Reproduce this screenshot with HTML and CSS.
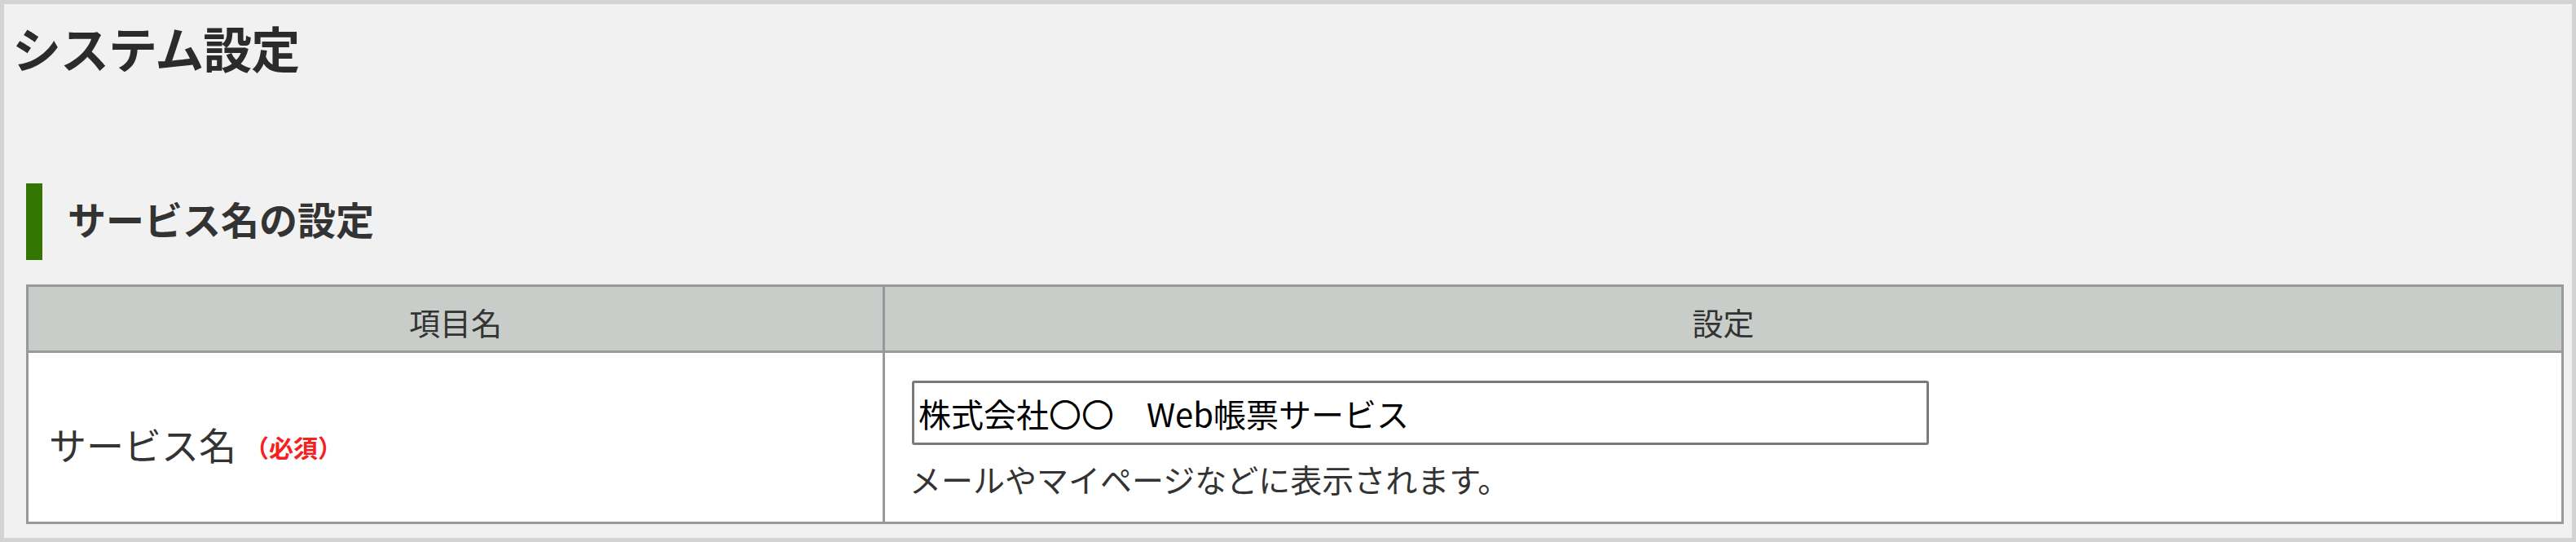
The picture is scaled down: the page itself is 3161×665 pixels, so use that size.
FILE: index.html
```html
<!DOCTYPE html>
<html lang="ja">
<head>
<meta charset="utf-8">
<title>システム設定</title>
<link rel="stylesheet" href="styles.css">
</head>
<body>
<div class="frame">
  <h1 class="page-title">システム設定</h1>
  <h2 class="section-title">サービス名の設定</h2>
  <div class="settings">
    <div class="th th-name">項目名</div>
    <div class="th th-value">設定</div>
    <div class="td td-name">サービス名<span class="required">（必須）</span></div>
    <div class="td td-value">
      <input class="text-input" type="text" value="株式会社〇〇　Web帳票サービス">
      <p class="help">メールやマイページなどに表示されます。</p>
    </div>
  </div>
</div>
</body>
</html>
```

FILE: styles.css
```css
html, body {
  margin: 0;
  padding: 0;
}
body {
  font-family: "Noto Sans CJK JP", "Noto Sans", sans-serif;
  color: #333;
}
.frame {
  box-sizing: border-box;
  width: 3161px;
  height: 665px;
  border: 5px solid #d3d3d3;
  background: #f0f1f0;
  overflow: hidden;
}
.page-title {
  margin: 23px 0 0 10px;
  font-size: 60px;
  line-height: 60px;
  letter-spacing: -1px;
  font-weight: bold;
  color: #2b2b2b;
}
.section-title {
  box-sizing: border-box;
  margin: 137px 0 0 27px;
  height: 94px;
  border-left: 20px solid #327500;
  padding: 20px 0 0 31px;
  font-size: 47px;
  line-height: 46px;
  font-weight: bold;
  color: #333;
}
.settings {
  box-sizing: border-box;
  margin: 30px 0 0 27px;
  width: 3114px;
  display: grid;
  grid-template-columns: 1051px 1fr;
  border: 3px solid #999;
  background: #fff;
}
.th {
  box-sizing: border-box;
  height: 81px;
  padding-top: 6px;
  background: #c8cdc9;
  border-bottom: 3px solid #999;
  display: flex;
  align-items: center;
  justify-content: center;
  font-size: 38px;
  font-weight: normal;
  color: #333;
}
.th-name, .td-name {
  border-right: 3px solid #999;
}
.td-name {
  display: flex;
  align-items: center;
  padding: 15px 0 0 25px;
  font-size: 46px;
  color: #333;
}
.required {
  margin-left: 10px;
  font-size: 30px;
  font-weight: bold;
  color: #f52020;
  padding-top: 8px;
}
.td-value {
  padding: 34px 0 24px 33px;
}
.text-input {
  display: block;
  box-sizing: border-box;
  width: 1248px;
  height: 79px;
  margin: 0;
  padding: 0 5px;
  border: 3px solid #7a7a7a;
  border-radius: 3px;
  font-family: "Noto Sans CJK JP", "Noto Sans", sans-serif;
  font-size: 40px;
  color: #000;
  background: #fff;
  outline: none;
}
.help {
  margin: 13px 0 0 -3px;
  font-size: 39px;
  line-height: 57px;
  color: #333;
}
```
